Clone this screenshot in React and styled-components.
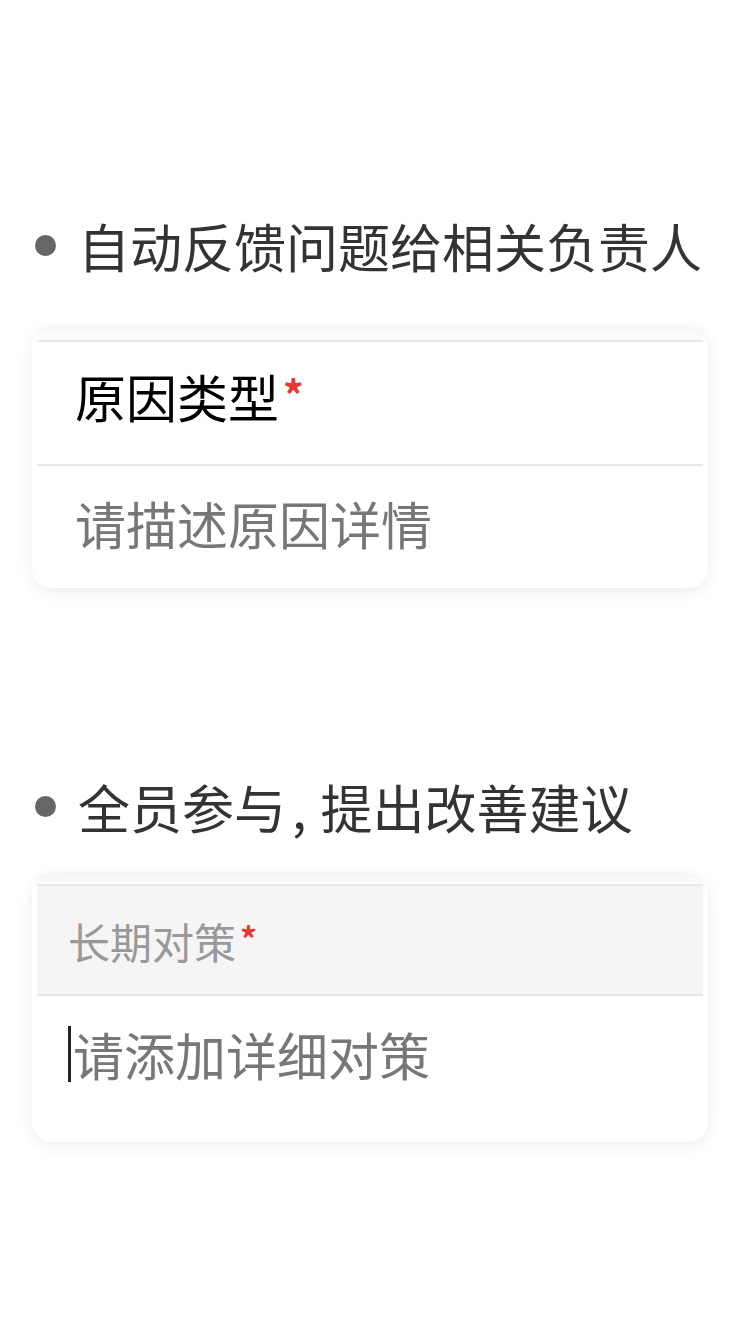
import React from 'react'
import styled, { createGlobalStyle } from 'styled-components'

const GlobalStyle = createGlobalStyle`
	html, body {
		margin: 0;
		padding: 0;
		background: #fff;
	}
	body {
		font-family: "Noto Sans CJK SC", "Noto Sans", sans-serif;
	}
`

const Page = styled.div`
	width: 750px;
	min-height: 1332px;
	padding-top: 208px;
	box-sizing: border-box;
	background: #fff;
`

const Section = styled.section`
	margin-bottom: ${(p) => p.gapAfter || 0}px;
`

const Heading = styled.h2`
	display: flex;
	align-items: center;
	gap: 22px;
	height: 74px;
	margin: 0 0 ${(p) => p.gapBelow}px;
	padding-left: 35px;
	font-size: 52px;
	font-weight: 400;
	color: #333;
	white-space: nowrap;
	&::before {
		content: '';
		width: 21px;
		height: 21px;
		border-radius: 50%;
		background: #666;
		flex-shrink: 0;
	}
`

const Comma = styled.span`
	padding: 0 14px 0 6px;
`

const Card = styled.div`
	margin: 0 42px 0 32px;
	padding: ${(p) => p.topPad}px 5px 0;
	border-radius: 20px;
	background: linear-gradient(#f6f6f6, #fff 18px);
	box-shadow: 0 4px 16px rgba(0, 0, 0, 0.07), 0 0 2px rgba(0, 0, 0, 0.04);
	overflow: hidden;
`

const Row = styled.div`
	display: flex;
	align-items: center;
	height: ${(p) => p.h}px;
	box-sizing: border-box;
	padding: 0 0 ${(p) => p.lift || 0}px ${(p) => p.indent || 38}px;
	border-top: 2px solid #e8e8e8;
	background: ${(p) => (p.shaded ? '#f5f5f5' : '#fff')};
	${(p) => p.shaded && 'border-bottom: 2px solid #e6e6e6;'}
	font-size: ${(p) => p.size || 51}px;
	color: ${(p) => p.color || '#000'};
`

const Required = styled.span`
	color: #e53935;
	font-size: 0.8em;
	font-weight: 700;
	margin-left: 4px;
	transform: translateY(-3px);
`

const Area = styled.div`
	height: 146px;
	padding: 28px 0 0 31px;
	box-sizing: border-box;
	background: #fff;
	display: flex;
	align-items: flex-start;
	font-size: 51px;
	line-height: 60px;
	color: #777;
`

const Caret = styled.span`
	display: inline-block;
	width: 3px;
	height: 56px;
	margin: 2px 2px 0 0;
	background: #222;
`

export default function App() {
	return (
		<Page>
			<GlobalStyle />
			<Section gapAfter={181}>
				<Heading gapBelow={44}>自动反馈问题给相关负责人</Heading>
				<Card topPad={14}>
					<Row h={124} lift={14}>
						原因类型<Required>*</Required>
					</Row>
					<Row h={124} lift={8} color='#777'>
						请描述原因详情
					</Row>
				</Card>
			</Section>
			<Section>
				<Heading gapBelow={30}>
					<span>
						全员参与<Comma>,</Comma>提出改善建议
					</span>
				</Heading>
				<Card topPad={11}>
					<Row h={112} shaded indent={31} size={42} color='#999'>
						长期对策<Required>*</Required>
					</Row>
					<Area>
						<Caret />
						请添加详细对策
					</Area>
				</Card>
			</Section>
		</Page>
	)
}
